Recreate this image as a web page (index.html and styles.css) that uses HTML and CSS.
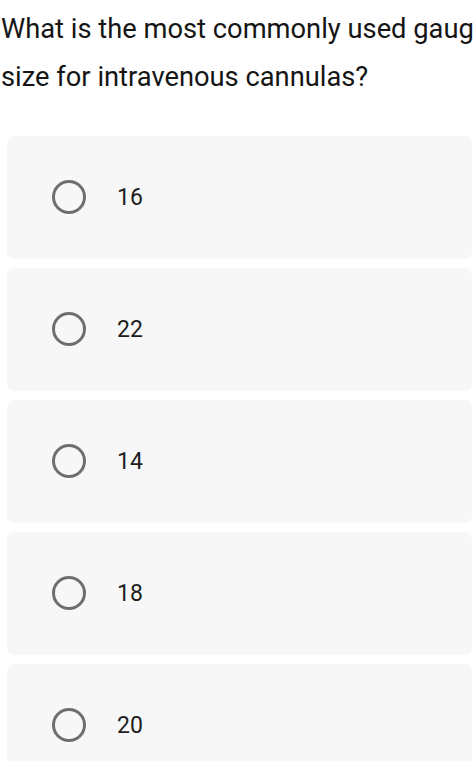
FILE: index.html
```html
<!DOCTYPE html>
<html lang="en">
<head>
  <meta charset="UTF-8" />
  <meta name="viewport" content="width=device-width, initial-scale=1.0" />
  <title>Quiz</title>
  <link rel="stylesheet" href="styles.css">
</head>
<body>
  <div class="question-wrap">
    <div class="question">What is the most commonly used gauge size for intravenous cannulas?</div>
  </div>

  <div class="options">
    <label class="option"><span class="radio"></span><span class="option-text">16</span></label>
    <label class="option"><span class="radio"></span><span class="option-text">22</span></label>
    <label class="option"><span class="radio"></span><span class="option-text">14</span></label>
    <label class="option"><span class="radio"></span><span class="option-text">18</span></label>
    <label class="option"><span class="radio"></span><span class="option-text">20</span></label>
  </div>
</body>
</html>
```
FILE: styles.css
```css
* { margin: 0; padding: 0; box-sizing: border-box; }
html, body { overflow: hidden; }
body { font-family: Roboto, "Noto Sans", sans-serif; background-color: #fff; color: #1b1b1b; width: 474px; height: 761px; }

.question-wrap {
  width: 474px;
  overflow: hidden;
}

.question {
  width: 520px;
  padding: 5px 0 0 1px;
  font-size: 27.3px;
  line-height: 48px;
  color: #151515;
}

.options {
  margin-top: 35px;
  padding-left: 7px;
  width: 472px;
}

.option {
  display: flex;
  align-items: center;
  height: 123px;
  margin-bottom: 9px;
  padding-left: 45px;
  padding-bottom: 1px;
  background-color: #f7f7f7;
  border-radius: 7px;
}

.radio {
  width: 34px;
  height: 34px;
  border: 3px solid #6e6e6e;
  border-radius: 50%;
  flex-shrink: 0;
}

.option-text {
  margin-left: 31px;
  font-size: 23px;
  color: #1e1e1e;
}
```
